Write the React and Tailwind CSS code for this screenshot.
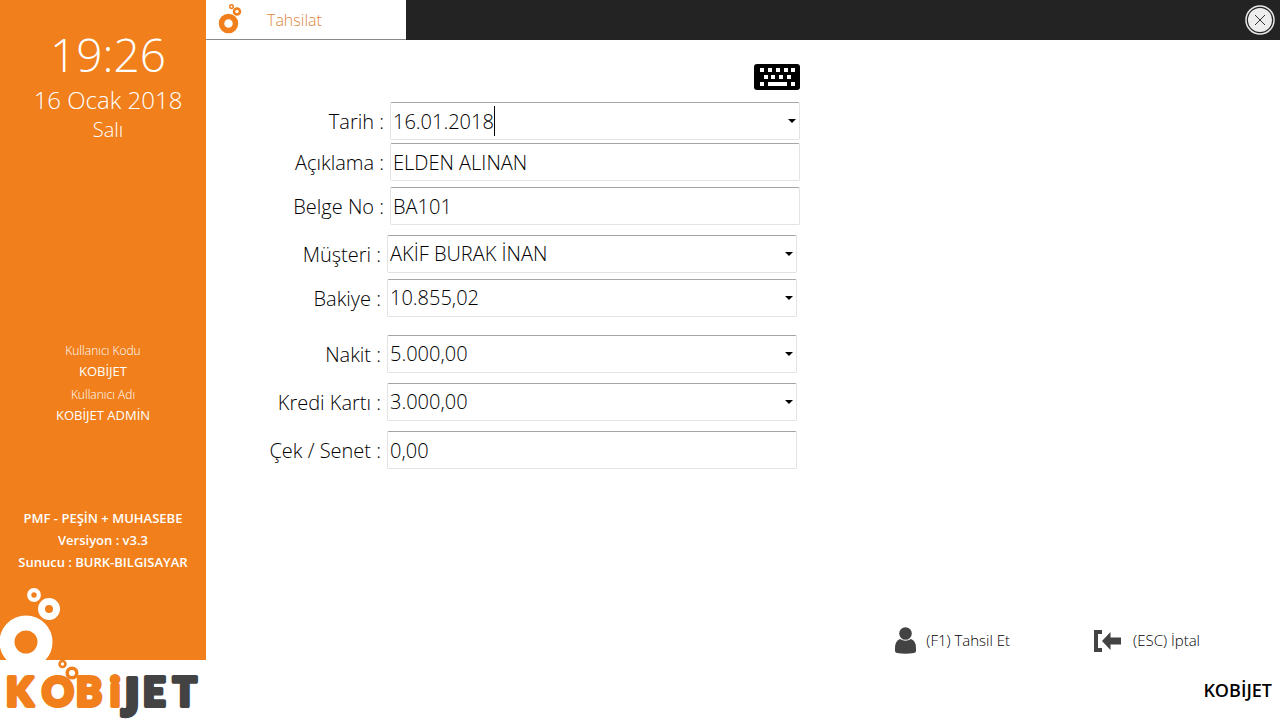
import { useState } from "react";

const rows = [
    { id: "tarih",    label: "Tarih :",       value: "16.01.2018",      type: "date",   wrap: "mr-0" },
    { id: "aciklama", label: "Açıklama :",    value: "ELDEN ALINAN",    type: "text",   wrap: "mt-[3px]" },
    { id: "belge",    label: "Belge No :",    value: "BA101",           type: "text",   wrap: "mt-1.5" },
    { id: "musteri",  label: "Müşteri :",     value: "AKİF BURAK İNAN", type: "select", wrap: "mt-2.5 mr-[3px]" },
    { id: "bakiye",   label: "Bakiye :",      value: "10.855,02",       type: "select", wrap: "mt-1.5 mr-[3px]" },
    { id: "nakit",    label: "Nakit :",       value: "5.000,00",        type: "select", wrap: "mt-[18px] mr-[3px]" },
    { id: "kredi",    label: "Kredi Kartı :", value: "3.000,00",        type: "select", wrap: "mt-2.5 mr-[3px]" },
    { id: "cek",      label: "Çek / Senet :", value: "0,00",            type: "text",   wrap: "mt-2.5 mr-[3px]" },
];

const fieldBase =
    "block w-full h-[38px] pl-0.5 appearance-none rounded-xs border border-[#e3e3e3] border-t-[#a5a5a5] bg-white text-xl text-black outline-none";

function Arrow() {
    return (
        <svg className="w-2 h-1" viewBox="0 0 8 4" aria-hidden="true">
            <path d="M0 0h8L4 4z" fill="#000" />
        </svg>
    );
}

function Field({ row }) {
    const [value, setValue] = useState(row.value);
    const onChange = (e) => setValue(e.target.value);

    return (
        <div className={`flex items-center ${row.wrap}`}>
            <label htmlFor={row.id} className="flex-1 pt-0.5 pr-1.5 text-right text-xl whitespace-nowrap">
                {row.label}
            </label>
            <div className="relative w-[410px]">
                {row.type === "select" ? (
                    <>
                        <select id={row.id} value={value} onChange={onChange} className={fieldBase}>
                            <option>{row.value}</option>
                        </select>
                        <span className="absolute inset-y-0 right-1 flex items-center pointer-events-none">
                            <Arrow />
                        </span>
                    </>
                ) : (
                    <input id={row.id} type="text" value={value} onChange={onChange} className={fieldBase} />
                )}
                {row.type === "date" && (
                    <>
                        {/* text cursor */}
                        <span className="absolute left-[104px] top-1 w-px h-[30px] bg-black" />
                        <button
                            type="button"
                            aria-label="Tarih seç"
                            className="absolute inset-y-0 right-1 flex items-center"
                        >
                            <Arrow />
                        </button>
                    </>
                )}
            </div>
        </div>
    );
}

function Bubbles({ className }) {
    return (
        <svg className={className} viewBox="0 0 24 31" fill="none" stroke="#f07f1c" aria-hidden="true">
            <circle cx="10.500" cy="19.500" r="7" strokeWidth="5.500" />
            <circle cx="19" cy="7.500" r="3" strokeWidth="2.500" />
            <circle cx="13.500" cy="2.600" r="1.800" strokeWidth="1.500" />
        </svg>
    );
}

function KeyboardIcon() {
    return (
        <svg className="w-[46px] h-[26px]" viewBox="0 0 46 26" aria-hidden="true">
            <rect width="46" height="26" rx="3" fill="#000" />
            <g fill="#fff">
                {[6, 14, 22, 30, 37].map((x) => (
                    <rect key={x} x={x} y="4" width="4" height="4" />
                ))}
                {[10, 17, 25, 33].map((x) => (
                    <rect key={x} x={x} y="11" width="4" height="4" />
                ))}
                <rect x="6" y="18" width="4" height="4" />
                <rect x="14" y="18" width="19" height="4" />
                <rect x="37" y="18" width="4" height="4" />
            </g>
        </svg>
    );
}

function Logo() {
    return (
        <svg className="block w-[206px] h-[60px] overflow-visible" viewBox="0 0 206 60" role="img" aria-label="KOBİJET">
            <g fontFamily="Lato, sans-serif" fontWeight="900" fontSize="39" strokeWidth="4" strokeLinejoin="round">
                <text x="6 42 76 110" y="46" fill="#f07f1c" stroke="#f07f1c">KOBi</text>
                <g fill="#434343" stroke="#434343">
                    <text x="125" y="47" fontFamily="Open Sans, sans-serif" fontWeight="800" fontSize="40">J</text>
                    <text x="143 173" y="46">ET</text>
                </g>
            </g>
            <g fill="#fff" stroke="#f07f1c">
                <circle cx="72" cy="13" r="4.800" strokeWidth="3.500" />
                <circle cx="62.500" cy="4" r="3" strokeWidth="2.500" />
            </g>
        </svg>
    );
}

function Sidebar() {
    return (
        <aside className="w-[206px] shrink-0 flex flex-col bg-[#f07f1c] text-white text-center">
            <div className="pt-6 pl-2.5 font-light">
                <div className="text-[46px] leading-[60px]">19:26</div>
                <div className="text-2xl leading-8">16 Ocak 2018</div>
                <div className="text-xl leading-7">Salı</div>
            </div>

            <div className="mt-auto text-[13px] leading-5">
                <div className="text-xs leading-5 font-light">Kullanıcı Kodu</div>
                <div>KOBİJET</div>
                <div className="mt-1 text-xs leading-5 font-light">Kullanıcı Adı</div>
                <div>KOBİJET ADMİN</div>
            </div>

            <div className="mt-[82px] text-[13px] leading-[22px] font-semibold">
                <div>PMF - PEŞİN + MUHASEBE</div>
                <div>Versiyon : v3.3</div>
                <div>Sunucu : BURK-BILGISAYAR</div>
            </div>

            <svg className="mt-[13px] w-[62px] h-[74px]" viewBox="0 0 62 74" fill="none" stroke="#fff" aria-hidden="true">
                <circle cx="26" cy="56" r="19" strokeWidth="15" />
                <circle cx="49" cy="23" r="7.500" strokeWidth="7" />
                <circle cx="34" cy="9" r="4.800" strokeWidth="4.200" />
            </svg>
            <div className="bg-white">
                <Logo />
            </div>
        </aside>
    );
}

export default function App() {
    return (
        <div className="min-h-screen flex bg-white text-black font-['Open_Sans','Noto_Sans',sans-serif]">
            <Sidebar />

            <div className="flex-1 flex flex-col font-light">
                <header className="h-10 flex justify-between bg-[#232323]">
                    <div className="w-[200px] flex items-center bg-white border-b border-[#8a8a8a] text-[#e0863c]">
                        <Bubbles className="ml-3 w-6 h-[31px]" />
                        <span className="ml-[25px] text-base">Tahsilat</span>
                    </div>
                    <button type="button" aria-label="Kapat" className="mr-[5px]">
                        <svg className="w-[30px] h-[30px]" viewBox="0 0 30 30" aria-hidden="true">
                            <circle cx="15" cy="15" r="14" fill="#232323" stroke="#e8e8e8" strokeWidth="1.500" />
                            <circle cx="15" cy="15" r="12" fill="#ededed" />
                            <path d="M10 10l10 10M20 10L10 20" stroke="#333" strokeWidth="1" />
                        </svg>
                    </button>
                </header>

                <form className="w-[594px] pt-6" onSubmit={(e) => e.preventDefault()}>
                    <div className="flex justify-end mb-3">
                        <button type="button" aria-label="Klavye">
                            <KeyboardIcon />
                        </button>
                    </div>
                    {rows.map((row) => (
                        <Field key={row.id} row={row} />
                    ))}
                </form>

                <footer className="mt-auto">
                    <div className="flex justify-end gap-[84px] pr-20 text-[15px]">
                        <button type="button" className="flex items-center gap-2.5">
                            <svg className="w-[21px] h-[27px]" viewBox="0 0 21 27" fill="#434343" aria-hidden="true">
                                <circle cx="10.500" cy="6.500" r="6.300" />
                                <path d="M5 12Q0 14 0 21v3q0 1.500 2 2 8.500 1.500 17 0 2-.5 2-2v-3q0-7-5-9-5.500 3.500-11 0z" />
                            </svg>
                            <span>(F1) Tahsil Et</span>
                        </button>
                        <button type="button" className="flex items-center gap-3">
                            <svg className="w-[27px] h-[22px]" viewBox="0 0 27 22" fill="#434343" aria-hidden="true">
                                <path d="M0 0h8v4H4v14h4v4H0z" />
                                <path d="M8 11l8.500-9v5.500H27v7H16.500V20z" />
                            </svg>
                            <span>(ESC) İptal</span>
                        </button>
                    </div>
                    <div className="mt-[22px] pr-2 pb-4 text-right text-lg leading-7 font-semibold">KOBİJET</div>
                </footer>
            </div>
        </div>
    );
}
